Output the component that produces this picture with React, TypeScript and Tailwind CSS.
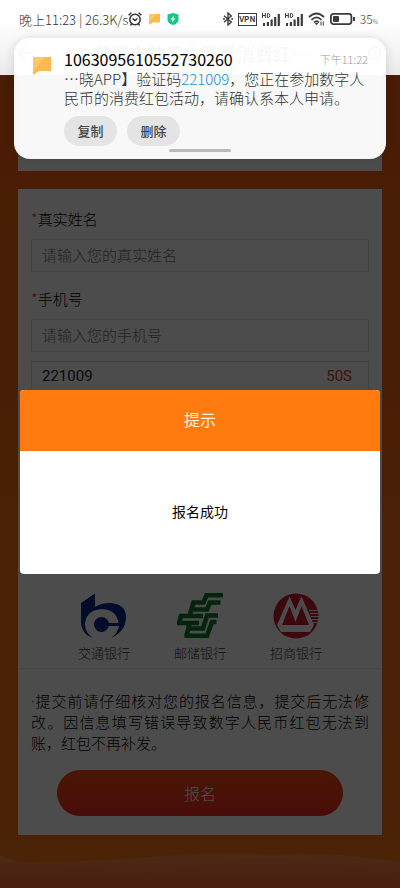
import type { ReactNode } from "react";

function StatusIcons() {
  return (
    <div className="flex items-center gap-[5px] text-[#3c3c3c]">
      <svg width="10" height="14" viewBox="0 0 10 14" fill="none" stroke="currentColor" strokeWidth="1.4">
        <path d="M1 3.8 8.3 10 5 13V1l3.3 3L1 10.200" />
        <circle cx="1" cy="7" r=".4" />
        <circle cx="9.200" cy="7" r=".4" />
      </svg>
      <span className="flex h-[13px] w-[19px] items-center justify-center border border-[#3c3c3c] text-[8px] leading-none font-bold">VPN</span>
      <Signal />
      <Signal />
      <svg width="17" height="14" viewBox="0 0 17 14" fill="none" stroke="currentColor" strokeWidth="1.8">
        <path d="M1 5q7.500-7 15 0M3.500 7.800q5-4.800 10 0M6 10.300q2.500-2.400 5 0" />
        <path d="m6.500 10.800 2 2.400 2-2.400z" fill="currentColor" stroke="none" />
        <path d="M13 9.500v4M15.300 9.500v4" strokeWidth="1" />
      </svg>
      <svg width="25" height="12" viewBox="0 0 25 12">
        <rect x=".9" y=".9" width="20.500" height="10.200" rx="2.500" fill="none" stroke="currentColor" strokeWidth="1.800" />
        <rect x="3" y="3" width="6" height="6" rx="1" fill="currentColor" />
        <path d="M23 4h2v4h-2z" fill="currentColor" />
      </svg>
      <span className="text-[12px] leading-none font-light">
        35<span className="text-[6px]">%</span>
      </span>
    </div>
  );
}

function Signal() {
  return (
    <svg width="18" height="13" viewBox="0 0 18 13" fill="currentColor">
      <path d="M1 10h2v3H1zM4.800 9h2.200v4H4.800zM8.500 6.500h2.200V13H8.500zM12.100 4h2.200v9h-2.200zM15.700 1h2.200v12h-2.200z" />
      <path d="M.5 0v5M3.300 0v5M.5 2.500h3M5.400.5v4h1q1.400 0 1.400-2t-1.400-2z" fill="none" stroke="currentColor" />
    </svg>
  );
}

function Message({ size }: { size: number }) {
  return (
    <svg width={size} height={size} viewBox="0 0 18 18">
      <path d="M0 0h18v14H6l-6 4z" fill="#fbb950" />
      <path d="M0 0h12L0 14z" fill="#fdc76d" />
    </svg>
  );
}

function BocomLogo() {
  return (
    <svg width="46" height="46" viewBox="0 0 46 46" fill="#0a2888">
      <path d="M0 10 14 .5V14Q20 10 29 10 45 11 45 24 45 38 30 45 37 40 38 33H26V30H37.500Q36 17 21 16 5 17 4 31 4 40 12 45 0 41 0 28z" />
      <circle cx="20.500" cy="31.500" r="7.500" />
    </svg>
  );
}

function PostalLogo() {
  return (
    <svg width="46" height="46" viewBox="0 0 46 46" fill="none" stroke="#127a30" strokeWidth="4.600">
      <path d="M46 2.300H29.500L26.500 9.500H15" />
      <path d="M43.500 9.500H33L30 16.500H14" />
      <path d="M41 22.500H30L26 35.500H10" />
      <path d="M39.500 29H35L30 42.700H7.500" />
      <path d="M26 23H4L2 30H22" />
      <path d="M17 8 12.500 23M12.500 30 9.500 43" />
    </svg>
  );
}

function CmbLogo() {
  return (
    <svg width="46" height="46" viewBox="0 0 46 46">
      <circle cx="23" cy="23" r="22.500" fill="#c9182c" />
      <path d="M16.500 3.500 22.500 17 28.500 3.500 41 32 37 39H8L4 32z" fill="#fff" />
      <path d="M16.500 13 22.500 29 28.500 13 36 32H9z" fill="#c9182c" />
      <path d="M36 17.500h9M37 20.500h9M38 23.500h8M39 26.500h7M40 29.500h5" stroke="#fff" strokeWidth="1.200" />
    </svg>
  );
}

function Bank({ name, children }: { name: string; children: ReactNode }) {
  return (
    <div className="flex w-24 flex-col items-center gap-1 text-[13px] leading-5 font-light text-[#333]">
      {children}
      <span>{name}</span>
    </div>
  );
}

const inputStyle =
  "block h-[33px] w-full border border-[#dcdcdc] bg-transparent px-[10px] pb-[3px] text-[15px] font-light text-[#222] placeholder:text-[#777] outline-none";

export default function App() {
  return (
    <div className="relative flex min-h-screen flex-col overflow-hidden bg-white font-['Noto_Sans_CJK_SC',sans-serif]">
      <header className="h-[75px] bg-linear-to-b from-white from-30% to-[#e9e9e9]">
        <div className="flex h-[38px] items-center justify-between pr-[22px] pl-[19px]">
          <div className="flex items-center text-[13px] leading-none font-light text-[#333]">
            <span>晚上11:23 | 26.3K/s</span>
            <svg width="14" height="14" viewBox="0 0 14 14" fill="none" stroke="currentColor" strokeWidth="1.500">
              <circle cx="7" cy="7.500" r="5.200" />
              <path d="M4.500 6.500 7 8.500l2.500-2M.6 3.200 3.400.8M13.400 3.200 10.600.8M3.500 12l-1 1.500M10.500 12l1 1.500" />
            </svg>
            <span className="mx-[7px]">
              <Message size={11} />
            </span>
            <svg width="12" height="12" viewBox="0 0 12 12">
              <path d="M6 0 11.500 1.500V7Q11 10.500 6 12 1 10.500.5 7V1.500z" fill="#18c583" />
              <path d="M7 2.500 3.500 6.500h2L5 9.500l3.500-4h-2z" fill="#fff" />
            </svg>
          </div>
          <StatusIcons />
        </div>
        <div className="flex h-[30px] items-center justify-between px-[18px] text-[18px] leading-5 font-medium text-[#444]">
          <svg width="16" height="14" viewBox="0 0 16 14" fill="none" stroke="currentColor" strokeWidth="1.500">
            <path d="M16 7H1M7 1 1 7l6 6" />
          </svg>
          <h1>慈溪市数字人民币消费红…</h1>
          <svg width="14" height="14" viewBox="0 0 14 14" fill="none" stroke="currentColor" strokeWidth="1.500">
            <circle cx="7" cy="7" r="6" />
            <path d="M5 9 9 5" />
          </svg>
        </div>
      </header>

      <main className="relative flex flex-1 flex-col bg-linear-to-b from-[#f75d12] to-[#fa7618] px-[18px]">
        <section className="h-24 bg-white" />

        <form className="mt-[18px] bg-white pt-5 pb-[19px]" onSubmit={(e) => e.preventDefault()}>
          <div className="px-[13px]">
            <label htmlFor="name" className="block text-[15px] leading-5 font-light text-black">
              <span className="text-[#f03020]">*</span>真实姓名
            </label>
            <input id="name" className={`${inputStyle} mt-[10px]`} placeholder="请输入您的真实姓名" />
            <label htmlFor="phone" className="mt-[17px] block text-[15px] leading-5 font-light text-black">
              <span className="text-[#f03020]">*</span>手机号
            </label>
            <input id="phone" className={`${inputStyle} mt-[10px]`} placeholder="请输入您的手机号" />
            <div className="mt-[9px] flex h-[33px] items-center border border-[#dcdcdc] pr-4 pb-[2px] pl-[10px] font-[Roboto,sans-serif] text-[15px]">
              <input aria-label="验证码" className="min-w-0 flex-1 bg-transparent text-[#222] outline-none" defaultValue="221009" />
              <button type="button" className="text-[#d04030]">50S</button>
            </div>
          </div>

          <div className="mt-[199px] flex justify-center">
            <Bank name="交通银行"><BocomLogo /></Bank>
            <Bank name="邮储银行"><PostalLogo /></Bank>
            <Bank name="招商银行"><CmbLogo /></Bank>
          </div>

          <div className="mt-[5px] h-px bg-[#f6e6e6]" />
          <div className="px-[13px]">
            <p className="mt-[21px] text-justify text-[15px] leading-[21px] font-light text-black">
              <span className="font-[Roboto,sans-serif] leading-none">·</span>提交前请仔细核对您的报名信息，提交后无法修改。因信息填写错误导致数字人民币红包无法到账，红包不再补发。
            </p>
            <button className="mx-auto mt-[17px] block h-[46px] w-[286px] rounded-full bg-linear-to-b from-[#f64c10] to-[#f62a20] text-[16px] font-light text-white">
              报名
            </button>
          </div>
        </form>

        <svg className="absolute bottom-0 left-0 h-9 w-full" viewBox="0 0 400 36" preserveAspectRatio="none">
          <defs>
            <linearGradient id="haze" x2="0" y2="1">
              <stop stopColor="#f8a060" />
              <stop offset="1" stopColor="#f55c45" />
            </linearGradient>
          </defs>
          <path d="M0 3Q12 9 25 10 90 10 150 5 220-1 270 3 330-1 400 10V36H0z" fill="url(#haze)" opacity=".65" />
          <path d="M190 16Q250 2 300 8T400 24V36H0V14Q60 10 110 20 150 26 190 16z" fill="#f57940" opacity=".25" />
        </svg>

        <div className="absolute inset-0 bg-black/70" />
        <div role="dialog" aria-labelledby="tip" className="absolute inset-x-5 top-[315px] overflow-hidden rounded bg-white text-center">
          <h2 id="tip" className="bg-[#ff7b10] pb-[2px] text-[16px] leading-[59px] text-[#fff3dc]">提示</h2>
          <p className="pb-[2px] text-[14px] leading-[121px] text-black">报名成功</p>
        </div>
      </main>

      <aside className="absolute inset-x-[14px] top-[38px] flex h-[121px] rounded-2xl bg-white/96 pt-[11px] pr-[18px] pl-[19px] shadow-[0_0_10px_rgba(0,0,0,0.12)]">
        <div className="mt-2 w-[31px] shrink-0">
          <Message size={18} />
        </div>
        <div className="min-w-0 flex-1">
          <div className="flex items-center justify-between leading-5">
            <strong className="text-[16px] font-normal text-black">1063095610552730260</strong>
            <time className="text-[11px] font-light text-[#999]">下午11:22</time>
          </div>
          <p className="text-[15px] leading-[19px] font-light whitespace-nowrap text-[#333]">
            …晓APP】验证码<a href="#code" className="text-[#1d8fd3]">221009</a>，您正在参加数字人
            <br />
            民币的消费红包活动，请确认系本人申请。
          </p>
          <div className="mt-[9px] flex gap-[10px] text-[13px] font-medium text-[#444]">
            <button className="h-[30px] w-[53px] rounded-full bg-[#e4e4e4]">复制</button>
            <button className="h-[30px] w-[53px] rounded-full bg-[#e4e4e4]">删除</button>
          </div>
        </div>
        <div className="absolute bottom-[7px] left-1/2 h-[3px] w-[62px] -translate-x-1/2 rounded-full bg-[#bbb]" />
      </aside>
    </div>
  );
}
